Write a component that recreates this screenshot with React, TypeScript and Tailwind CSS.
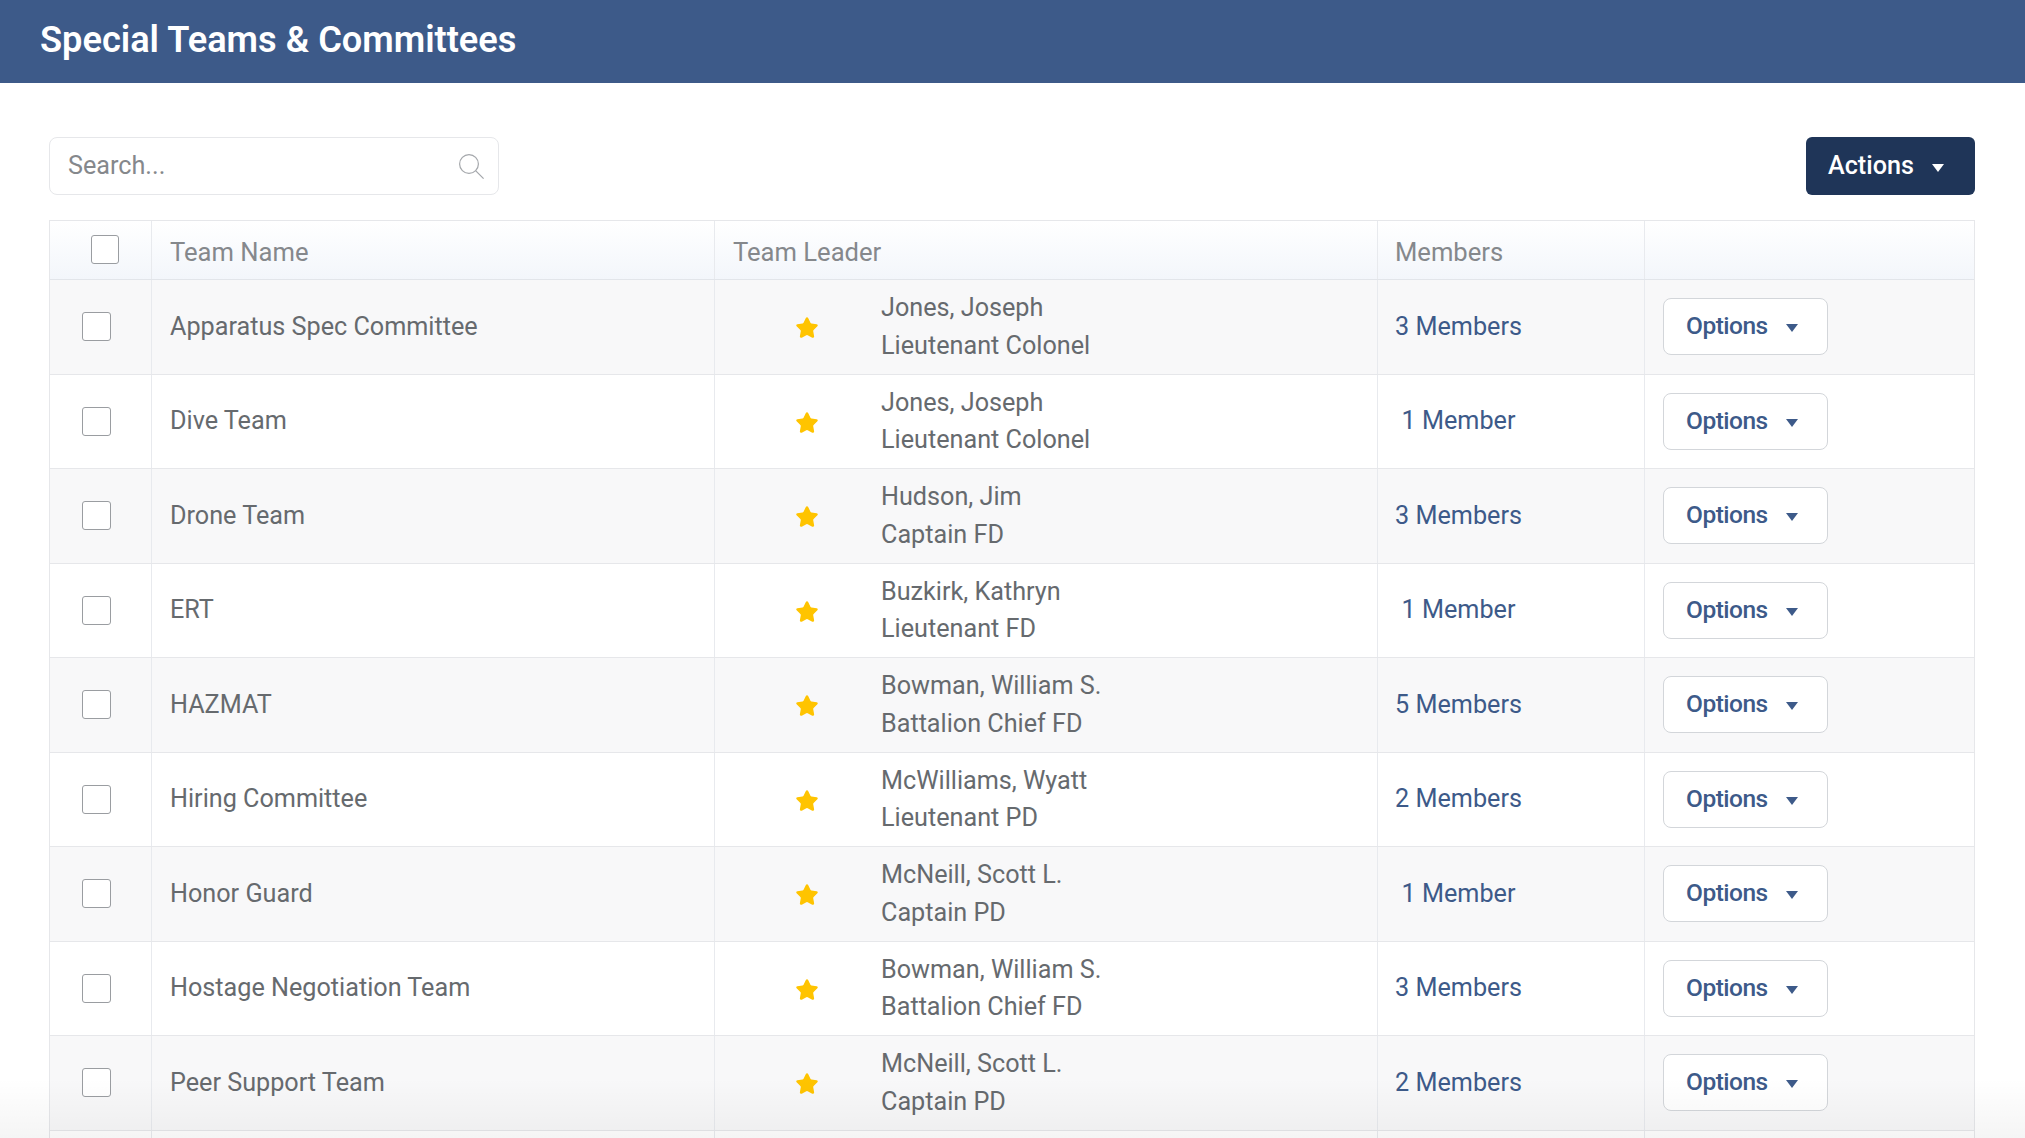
import { Star } from "lucide-react";

const teams = [
  { name: "Apparatus Spec Committee", leader: "Jones, Joseph", rank: "Lieutenant Colonel", members: "3 Members" },
  { name: "Dive Team", leader: "Jones, Joseph", rank: "Lieutenant Colonel", members: "1 Member" },
  { name: "Drone Team", leader: "Hudson, Jim", rank: "Captain FD", members: "3 Members" },
  { name: "ERT", leader: "Buzkirk, Kathryn", rank: "Lieutenant FD", members: "1 Member" },
  { name: "HAZMAT", leader: "Bowman, William S.", rank: "Battalion Chief FD", members: "5 Members" },
  { name: "Hiring Committee", leader: "McWilliams, Wyatt", rank: "Lieutenant PD", members: "2 Members" },
  { name: "Honor Guard", leader: "McNeill, Scott L.", rank: "Captain PD", members: "1 Member" },
  { name: "Hostage Negotiation Team", leader: "Bowman, William S.", rank: "Battalion Chief FD", members: "3 Members" },
  { name: "Peer Support Team", leader: "McNeill, Scott L.", rank: "Captain PD", members: "2 Members" },
];

const Caret = ({ className }: { className: string }) => (
  <svg viewBox="0 0 12 8" className={className} fill="currentColor">
    <path d="M0 0h12L6 8z" />
  </svg>
);

const App = () => {
  return (
    <div className="relative h-[1138px] overflow-hidden bg-white font-['Roboto',sans-serif] text-[25.2px] text-[#666a6e]">
      <header className="flex h-[83px] items-center bg-[#3d5a89] pb-[3px] pl-10">
        <h1 className="text-[36.2px] font-semibold text-white">Special Teams &amp; Committees</h1>
      </header>

      <div className="pl-[49px] pr-[50px] pt-[54px]">
        <div className="mb-[25px] flex items-center justify-between">
          <div className="flex h-[58px] w-[450px] items-center justify-between rounded-lg border border-[#e6e7ea] pl-[18px] pr-[14px]">
            <span className="text-[#85888c]">Search...</span>
            <svg viewBox="0 0 25 25" className="h-[25px] w-[25px] text-[#a4a7ab]" fill="none" stroke="currentColor" strokeWidth="1.2">
              <circle cx="10" cy="10" r="9.4" />
              <path d="M16.8 16.8 24.6 24.6" />
            </svg>
          </div>
          <button className="flex h-[58px] w-[169px] items-center rounded-md bg-[#1f3558] pl-[22px] font-medium text-white">
            Actions
            <Caret className="ml-[18px] mt-[3px] h-[8px] w-[12px]" />
          </button>
        </div>

        <div className="border-l border-r border-t border-[#e6e7ea]">
          <div className="flex h-[59px] border-b border-[#e2e5ea] bg-gradient-to-b from-white to-[#f3f6fb] text-[25.6px] text-[#85888c]">
            <div className="flex w-[102px] shrink-0 justify-center border-r border-[#e8eaee] pt-[14px]">
              <div className="ml-[9px] h-[29px] w-[28px] rounded-[3px] border border-[#9a9da1] bg-white" />
            </div>
            <div className="flex w-[563px] shrink-0 items-center border-r border-[#e8eaee] pl-[18px] pt-[5px]">Team Name</div>
            <div className="flex w-[663px] shrink-0 items-center border-r border-[#e8eaee] pl-[18px] pt-[5px]">Team Leader</div>
            <div className="flex w-[267px] shrink-0 items-center border-r border-[#e8eaee] pl-[17px] pt-[5px]">Members</div>
            <div className="flex-1" />
          </div>

          {teams.map((team, index) => (
            <div key={index} className={`flex h-[94.5px] border-b border-[#e6e7ea] ${index % 2 === 0 ? "bg-[#f8f8f9]" : "bg-white"}`}>
              <div className="flex w-[102px] shrink-0 items-center border-r border-[#e8eaee] pl-[32px]">
                <div className="h-[29px] w-[29px] rounded-[3px] border border-[#9a9da1] bg-white" />
              </div>
              <div className="flex w-[563px] shrink-0 items-center border-r border-[#e8eaee] pl-[18px]">{team.name}</div>
              <div className="flex w-[663px] shrink-0 items-center border-r border-[#e8eaee]">
                <div className="flex w-[166px] shrink-0 justify-end pr-[62px] pt-[3px]">
                  <Star className="h-[24px] w-[24px] text-[#ffc400]" fill="currentColor" strokeWidth={1.5} />
                </div>
                <div className="leading-[37.7px]">
                  <div>{team.leader}</div>
                  <div>{team.rank}</div>
                </div>
              </div>
              <div className="flex w-[267px] shrink-0 items-center border-r border-[#e8eaee] pl-[17px] text-[#3d5a89]">
                <span className="w-[127px] text-center">{team.members}</span>
              </div>
              <div className="flex flex-1 items-center pl-[18px]">
                <button className="flex h-[57px] w-[165px] items-center rounded-lg border border-[#d3d6da] bg-white pl-[22px] text-[24.5px] font-medium tracking-[-0.5px] text-[#3d5a89]">
                  Options
                  <Caret className="ml-[18px] mt-[3px] h-[8px] w-[12px]" />
                </button>
              </div>
            </div>
          ))}
          <div className="flex h-[94px]">
            <div className="w-[102px] shrink-0 border-r border-[#e8eaee]" />
            <div className="w-[563px] shrink-0 border-r border-[#e8eaee]" />
            <div className="w-[663px] shrink-0 border-r border-[#e8eaee]" />
            <div className="w-[267px] shrink-0 border-r border-[#e8eaee]" />
          </div>
        </div>
      </div>

      <div className="pointer-events-none absolute inset-x-0 bottom-0 h-[60px] bg-gradient-to-b from-transparent to-black/4" />
    </div>
  );
};

export default App;
